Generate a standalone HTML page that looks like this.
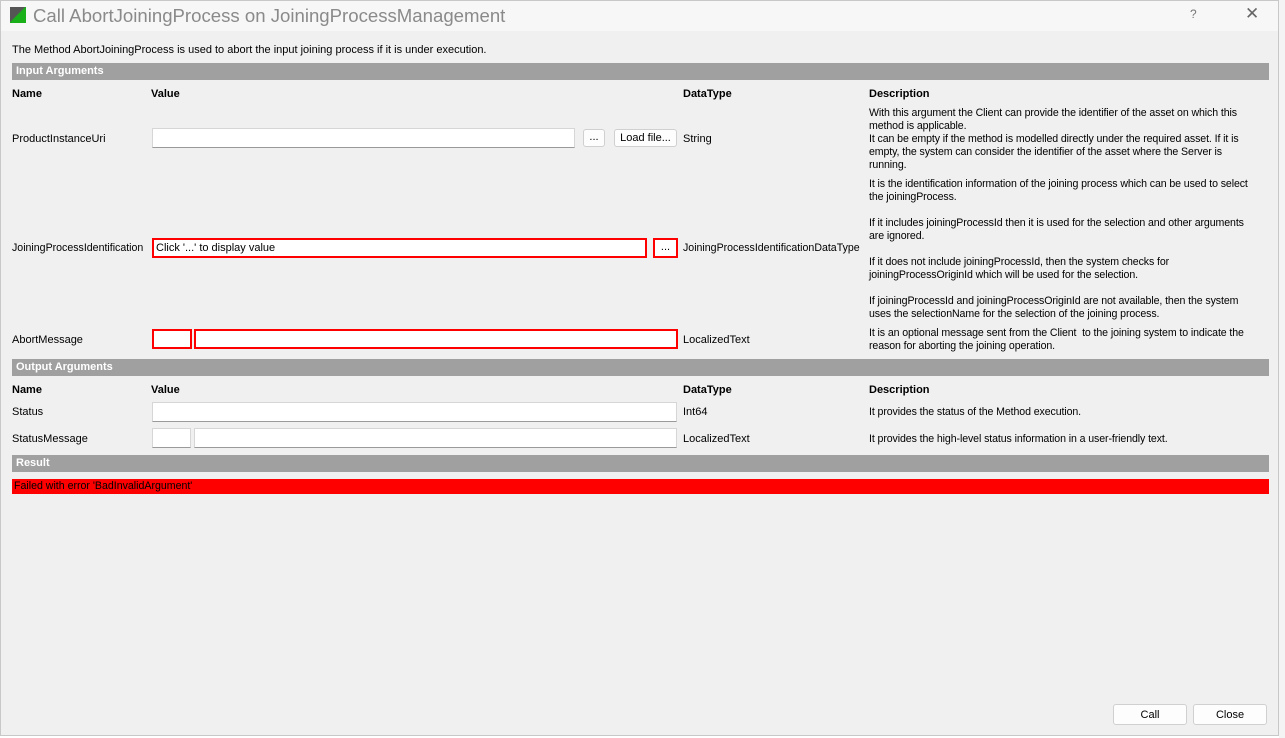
<!DOCTYPE html>
<html><head><style>
*{margin:0;padding:0;box-sizing:border-box}
body{width:1285px;height:738px;background:#fff;position:relative;overflow:hidden;font-family:"Liberation Sans",sans-serif;font-size:11px;color:#000}
.dlg{position:absolute;left:0;top:0;width:1279px;height:736px;background:#f0f0f0;border:1px solid #c8c8c8}
.tb{position:absolute;left:0;top:0;width:100%;height:30px;background:#f7f7f7}
.a{position:absolute;white-space:nowrap;line-height:13px}
.d{font-size:10.6px;letter-spacing:-0.1px}
.hdr{position:absolute;left:11px;width:1257px;height:17px;background:#a0a0a0;color:#fff;font-weight:bold;padding-left:4px;line-height:17px}
.b{font-weight:bold}
.in{position:absolute;background:#fff;border:1px solid #d6d6d6;border-bottom-color:#9a9a9a}
.red{position:absolute;background:#fff;border:2px solid #f00}
.btn{position:absolute;background:#fdfdfd;border:1px solid #d0d0d0;border-radius:3px;text-align:center}
</style></head><body>
<div style="position:absolute;left:1279px;top:0;width:6px;height:738px;background:#f4f4f4"></div>
<div class="dlg">
<div class="tb">
<div style="position:absolute;left:9px;top:6px;width:16px;height:16px;background:linear-gradient(135deg,#555 0 45%,#1ab01a 50%);"></div>
<div class="a" style="left:32px;top:5px;font-size:18.6px;line-height:20px;color:#8a8a8a">Call AbortJoiningProcess on JoiningProcessManagement</div>
<div class="a" style="left:1189px;top:7px;font-size:12px;color:#777">?</div>
<div class="a" style="left:1244px;top:4px;font-size:17px;line-height:17px;color:#666">✕</div>
</div>
<div class="a" style="left:11px;top:43px">The Method AbortJoiningProcess is used to abort the input joining process if it is under execution.</div>
<div class="hdr" style="top:62px">Input Arguments</div>
<div class="a b" style="left:11px;top:87px">Name</div>
<div class="a b" style="left:150px;top:87px">Value</div>
<div class="a b" style="left:682px;top:87px">DataType</div>
<div class="a b" style="left:868px;top:87px">Description</div>

<div class="a" style="left:11px;top:132px">ProductInstanceUri</div>
<div class="in" style="left:151px;top:127px;width:423px;height:20px"></div>
<div class="btn" style="left:582px;top:128px;width:22px;height:18px;line-height:15px">...</div>
<div class="btn" style="left:613px;top:128px;width:63px;height:18px;line-height:16px">Load file...</div>
<div class="a" style="left:682px;top:132px">String</div>
<div class="a d" style="left:868px;top:106px;line-height:13px">With this argument the Client can provide the identifier of the asset on which this<br>method is applicable.<br>It can be empty if the method is modelled directly under the required asset. If it is<br>empty, the system can consider the identifier of the asset where the Server is<br>running.</div>
<div class="a d" style="left:868px;top:177px">It is the identification information of the joining process which can be used to select<br>the joiningProcess.<br><br>If it includes joiningProcessId then it is used for the selection and other arguments<br>are ignored.<br><br>If it does not include joiningProcessId, then the system checks for<br>joiningProcessOriginId which will be used for the selection.<br><br>If joiningProcessId and joiningProcessOriginId are not available, then the system<br>uses the selectionName for the selection of the joining process.</div>

<div class="a" style="left:11px;top:241px;font-size:10.6px">JoiningProcessIdentification</div>
<div class="red" style="left:151px;top:237px;width:495px;height:20px;padding-left:2px;line-height:16px">Click '...' to display value</div>
<div class="red" style="left:652px;top:237px;width:25px;height:20px;text-align:center;line-height:15px">...</div>
<div class="a" style="left:682px;top:241px;font-size:10.6px">JoiningProcessIdentificationDataType</div>

<div class="a" style="left:11px;top:333px">AbortMessage</div>
<div class="red" style="left:151px;top:328px;width:40px;height:20px"></div>
<div class="red" style="left:193px;top:328px;width:484px;height:20px"></div>
<div class="a" style="left:682px;top:333px">LocalizedText</div>
<div class="a d" style="left:868px;top:326px">It is an optional message sent from the Client&nbsp; to the joining system to indicate the<br>reason for aborting the joining operation.</div>

<div class="hdr" style="top:358px">Output Arguments</div>
<div class="a b" style="left:11px;top:383px">Name</div>
<div class="a b" style="left:150px;top:383px">Value</div>
<div class="a b" style="left:682px;top:383px">DataType</div>
<div class="a b" style="left:868px;top:383px">Description</div>
<div class="a" style="left:11px;top:405px">Status</div>
<div class="in" style="left:151px;top:401px;width:525px;height:20px"></div>
<div class="a" style="left:682px;top:405px">Int64</div>
<div class="a d" style="left:868px;top:405px">It provides the status of the Method execution.</div>
<div class="a" style="left:11px;top:432px">StatusMessage</div>
<div class="in" style="left:151px;top:427px;width:39px;height:20px"></div>
<div class="in" style="left:193px;top:427px;width:483px;height:20px"></div>
<div class="a" style="left:682px;top:432px">LocalizedText</div>
<div class="a d" style="left:868px;top:432px">It provides the high-level status information in a user-friendly text.</div>

<div class="hdr" style="top:454px">Result</div>
<div style="position:absolute;left:11px;top:478px;width:1257px;height:15px;background:#f00;line-height:15px;padding-left:2px;font-size:10.6px">Failed with error 'BadInvalidArgument'</div>

<div class="btn" style="left:1112px;top:703px;width:74px;height:21px;line-height:20px">Call</div>
<div class="btn" style="left:1192px;top:703px;width:74px;height:21px;line-height:20px">Close</div>
</div>
</body></html>
